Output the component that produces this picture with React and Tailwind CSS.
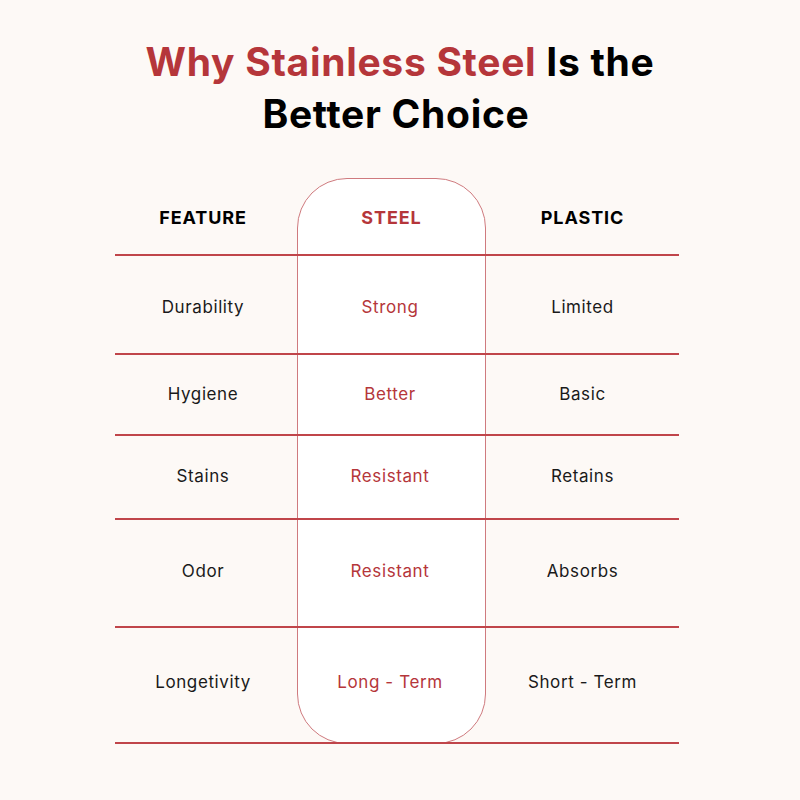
const rows = [
  { feature: "Durability", steel: "Strong", plastic: "Limited", nudge: "pt-[4px]" },
  { feature: "Hygiene", steel: "Better", plastic: "Basic", nudge: "pb-[2px]" },
  { feature: "Stains", steel: "Resistant", plastic: "Retains", nudge: "pb-[2px]" },
  { feature: "Odor", steel: "Resistant", plastic: "Absorbs", nudge: "pb-[4px]" },
  { feature: "Longetivity", steel: "Long - Term", plastic: "Short - Term", nudge: "pb-[6px]" },
];

const rowStarts = ["row-start-2", "row-start-3", "row-start-4", "row-start-5", "row-start-6"];

export default function App() {
  return (
    <div className="w-[800px] h-[800px] bg-[#fdf9f6] overflow-hidden" style={{ fontFamily: "Inter, 'Open Sans', sans-serif" }}>
      <h1 className="pt-[36px] text-center text-[39px] leading-[52px] font-bold text-black tracking-[0.7px]">
        <span className="text-[#b5363a]">Why Stainless Steel</span> Is the
        <br />
        <span className="pr-[8px]">Better Choice</span>
      </h1>

      <div className="mt-[38px] ml-[115px] w-[564px] grid grid-cols-[182px_189px_193px] grid-rows-[78px_99px_81px_84px_108px_116px]">
        {/* steel column background */}
        <div className="col-start-2 row-start-1 row-span-6 bg-white border border-[#cf7a7e] rounded-[50px]"></div>

        {/* divider lines */}
        <div className="col-start-1 col-span-3 row-start-1 self-end h-[2px] bg-[#c0454a]"></div>
        {rowStarts.map((r, i) => (
          <div key={i} className={`col-start-1 col-span-3 ${r} self-end h-[2px] bg-[#c0454a]`}></div>
        ))}

        {/* header */}
        <div className="col-start-1 row-start-1 pr-[6px] flex items-center justify-center text-[18px] font-bold tracking-[0.9px] text-black">FEATURE</div>
        <div className="col-start-2 row-start-1 flex items-center justify-center text-[18px] font-bold tracking-[0.9px] text-[#b5363a]">STEEL</div>
        <div className="col-start-3 row-start-1 flex items-center justify-center text-[18px] font-bold tracking-[0.9px] text-black">PLASTIC</div>

        {rows.map((row, i) => (
          <div key={row.feature} className="contents">
            <div className={`col-start-1 ${rowStarts[i]} ${row.nudge} pr-[6px] flex items-center justify-center text-[17px] tracking-[0.6px] text-[#1a1a1a]`}>{row.feature}</div>
            <div className={`col-start-2 ${rowStarts[i]} ${row.nudge} pr-[3px] flex items-center justify-center text-[17px] tracking-[0.6px] text-[#b5363a]`}>{row.steel}</div>
            <div className={`col-start-3 ${rowStarts[i]} ${row.nudge} flex items-center justify-center text-[17px] tracking-[0.6px] text-[#1a1a1a]`}>{row.plastic}</div>
          </div>
        ))}
      </div>
    </div>
  );
}
